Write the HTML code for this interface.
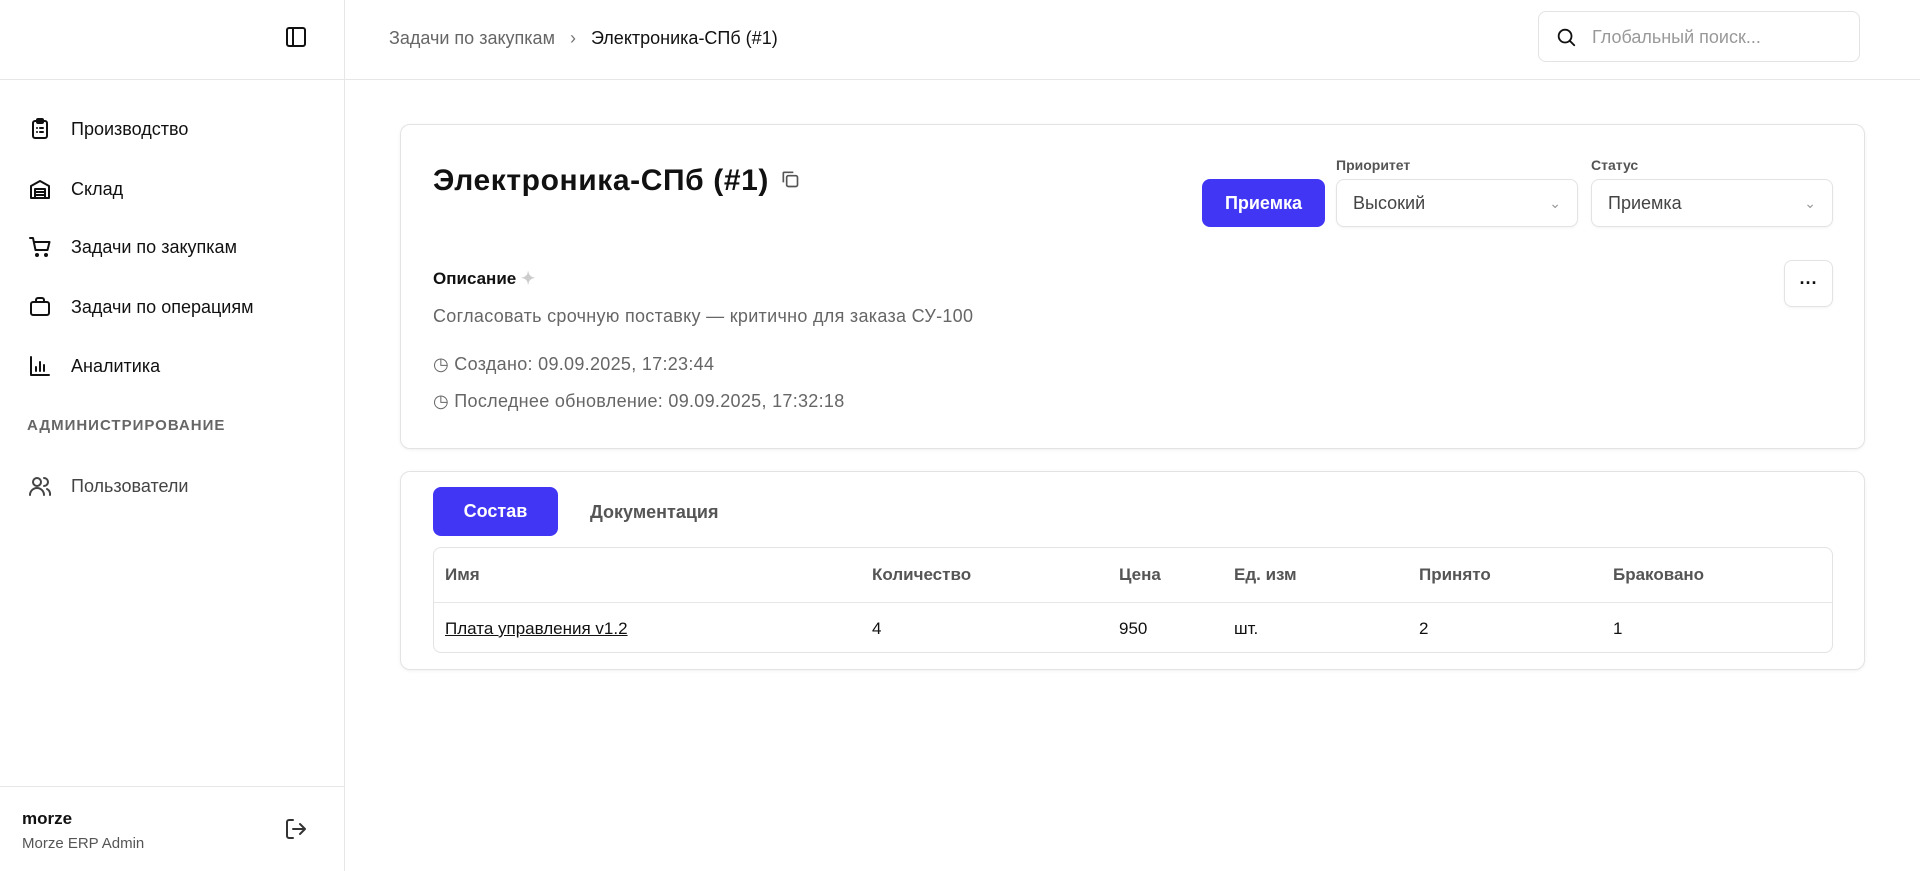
<!DOCTYPE html>
<html><head><meta charset="utf-8"><style>
*{box-sizing:border-box;margin:0;padding:0}
body{width:1920px;height:871px;overflow:hidden;background:#fff;font-family:"Liberation Sans","Noto Sans CJK SC",sans-serif;color:#111;position:relative}
.abs{position:absolute}
.side{left:0;top:0;width:345px;height:871px;border-right:1px solid #e6e6e6}
.hline{left:0;top:79px;width:1920px;height:1px;background:#e6e6e6}
.nav{left:28px;display:flex;align-items:center;font-size:18px;color:#111}
.nav svg{width:24px;height:24px;margin-right:19px;fill:none;stroke:#111;stroke-width:2;stroke-linecap:round;stroke-linejoin:round}
.card{border:1px solid #e3e3e3;border-radius:10px;box-shadow:0 1px 3px rgba(0,0,0,.06)}
.sel{border:1px solid #e3e3e3;border-radius:8px;height:48px;display:flex;align-items:center;padding:0 16px;font-size:18px;color:#444;justify-content:space-between;box-shadow:0 1px 2px rgba(0,0,0,.05)}
.lbl{font-size:14px;color:#555;font-weight:bold}
.gray{color:#666;font-size:18px;letter-spacing:.3px}
.col{font-size:17px;color:#555;font-weight:bold}
.cell{font-size:17px;color:#111}
</style></head><body>
<div class="abs side"></div>
<div class="abs hline"></div>
<svg class="abs" style="left:284px;top:25px" width="24" height="24" viewBox="0 0 24 24" fill="none" stroke="#111" stroke-width="2"><rect x="3" y="3" width="18" height="18" rx="2"/><line x1="9" y1="3" x2="9" y2="21"/></svg>

<div class="abs nav" style="top:117px"><svg viewBox="0 0 24 24"><rect x="5" y="4" width="14" height="17" rx="2"/><rect x="9" y="2" width="6" height="4" rx="1"/><path d="M9 11h.01M12 11h3M9 15h.01M12 15h3"/></svg>Производство</div>
<div class="abs nav" style="top:177px"><svg viewBox="0 0 24 24"><path d="M3 21V9l9-5 9 5v12z"/><path d="M7 21V12h10v9M7 15h10M7 18h10"/></svg>Склад</div>
<div class="abs nav" style="top:235px"><svg viewBox="0 0 24 24"><path d="M2 3h3l2.5 12h12l2-8H6"/><circle cx="9" cy="20" r="1"/><circle cx="18" cy="20" r="1"/></svg>Задачи по закупкам</div>
<div class="abs nav" style="top:295px"><svg viewBox="0 0 24 24"><rect x="3" y="7" width="18" height="13" rx="2"/><path d="M8 7V5a2 2 0 0 1 2-2h4a2 2 0 0 1 2 2v2"/></svg>Задачи по операциям</div>
<div class="abs nav" style="top:354px"><svg viewBox="0 0 24 24"><path d="M3 3v18h18M8 17v-4M12 17V8M16 17v-6"/></svg>Аналитика</div>
<div class="abs" style="left:27px;top:417px;font-size:15px;font-weight:bold;color:#666;letter-spacing:1px">АДМИНИСТРИРОВАНИЕ</div>
<div class="abs nav" style="top:474px;color:#444"><svg viewBox="0 0 24 24" style="stroke:#444"><circle cx="9" cy="8" r="4"/><path d="M2 21a7 7 0 0 1 14 0M16 4a4 4 0 0 1 0 8M19 15a6 6 0 0 1 3 6"/></svg>Пользователи</div>
<div class="abs" style="left:0;top:786px;width:345px;height:1px;background:#e6e6e6"></div>
<div class="abs" style="left:22px;top:809px;font-size:17px;font-weight:bold">morze</div>
<div class="abs" style="left:22px;top:835px;font-size:15px;color:#555">Morze ERP Admin</div>
<svg class="abs" style="left:284px;top:817px" width="24" height="24" viewBox="0 0 24 24" fill="none" stroke="#333" stroke-width="2" stroke-linecap="round" stroke-linejoin="round"><path d="M9 21H5a2 2 0 0 1-2-2V5a2 2 0 0 1 2-2h4M16 17l5-5-5-5M21 12H9"/></svg>

<div class="abs" style="left:389px;top:28px;font-size:18px;color:#666">Задачи по закупкам <span style="margin:0 10px;color:#777">&#8250;</span> <span style="color:#111">Электроника-СПб (#1)</span></div>
<div class="abs" style="left:1538px;top:11px;width:322px;height:51px;border:1px solid #e3e3e3;border-radius:8px"></div>
<svg class="abs" style="left:1555px;top:26px" width="22" height="22" viewBox="0 0 24 24" fill="none" stroke="#111" stroke-width="2" stroke-linecap="round"><circle cx="11" cy="11" r="7"/><path d="M21 21l-5-5"/></svg>
<div class="abs" style="left:1592px;top:27px;font-size:18px;color:#999">Глобальный поиск...</div>

<div class="abs card" style="left:400px;top:124px;width:1465px;height:325px"></div>
<div class="abs" style="left:433px;top:164px;font-size:30px;font-weight:bold;letter-spacing:.6px">Электроника-СПб (#1)</div>
<svg class="abs" style="left:780px;top:169px" width="20" height="20" viewBox="0 0 24 24" fill="none" stroke="#555" stroke-width="2"><rect x="8" y="8" width="13" height="13" rx="2"/><path d="M4 16V5a1 1 0 0 1 1-1h11"/></svg>
<div class="abs" style="left:1202px;top:179px;width:123px;height:48px;background:#4236f5;border-radius:8px;color:#fff;font-size:18px;font-weight:bold;display:flex;align-items:center;justify-content:center">Приемка</div>
<div class="abs lbl" style="left:1336px;top:157px">Приоритет</div>
<div class="abs sel" style="left:1336px;top:179px;width:242px">Высокий<span style="color:#999;font-size:14px">&#8964;</span></div>
<div class="abs lbl" style="left:1591px;top:157px">Статус</div>
<div class="abs sel" style="left:1591px;top:179px;width:242px">Приемка<span style="color:#999;font-size:14px">&#8964;</span></div>
<div class="abs" style="left:433px;top:269px;font-size:17px;font-weight:bold">Описание <span style="color:#ccc">&#10022;</span></div>
<div class="abs" style="left:1784px;top:260px;width:49px;height:47px;border:1px solid #e3e3e3;border-radius:8px;display:flex;align-items:center;justify-content:center;font-weight:bold;font-size:18px;box-shadow:0 1px 2px rgba(0,0,0,.05)">&middot;&middot;&middot;</div>
<div class="abs gray" style="left:433px;top:306px">Согласовать срочную поставку — критично для заказа СУ-100</div>
<div class="abs gray" style="left:433px;top:354px">&#9719; Создано: 09.09.2025, 17:23:44</div>
<div class="abs gray" style="left:433px;top:391px">&#9719; Последнее обновление: 09.09.2025, 17:32:18</div>

<div class="abs card" style="left:400px;top:471px;width:1465px;height:199px"></div>
<div class="abs" style="left:433px;top:487px;width:125px;height:49px;background:#4236f5;border-radius:8px;color:#fff;font-size:18px;font-weight:bold;display:flex;align-items:center;justify-content:center">Состав</div>
<div class="abs" style="left:590px;top:502px;font-size:18px;font-weight:bold;color:#555">Документация</div>
<div class="abs" style="left:433px;top:547px;width:1400px;height:106px;border:1px solid #e3e3e3;border-radius:8px"></div>
<div class="abs" style="left:434px;top:602px;width:1398px;height:1px;background:#e6e6e6"></div>
<div class="abs col" style="left:445px;top:565px">Имя</div>
<div class="abs col" style="left:872px;top:565px">Количество</div>
<div class="abs col" style="left:1119px;top:565px">Цена</div>
<div class="abs col" style="left:1234px;top:565px">Ед. изм</div>
<div class="abs col" style="left:1419px;top:565px">Принято</div>
<div class="abs col" style="left:1613px;top:565px">Браковано</div>
<div class="abs cell" style="left:445px;top:619px;text-decoration:underline">Плата управления v1.2</div>
<div class="abs cell" style="left:872px;top:619px">4</div>
<div class="abs cell" style="left:1119px;top:619px">950</div>
<div class="abs cell" style="left:1234px;top:619px">шт.</div>
<div class="abs cell" style="left:1419px;top:619px">2</div>
<div class="abs cell" style="left:1613px;top:619px">1</div>
</body></html>
